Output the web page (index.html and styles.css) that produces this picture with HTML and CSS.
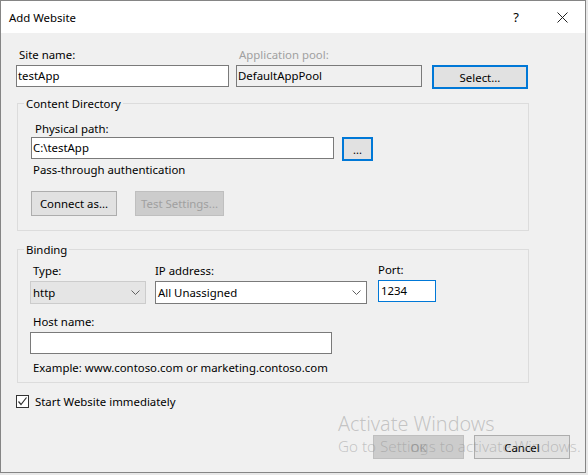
FILE: index.html
```html
<!DOCTYPE html>
<html lang="en">
<head>
    <meta charset="UTF-8">
    <title>Add Website</title>
    <link rel="stylesheet" href="styles.css">
</head>
<body>
    <div class="window">
        <div class="titlebar">
            <div class="title">Add Website</div>
            <div class="caption-btn">?</div>
            <div class="caption-btn">
                <svg width="11" height="11" viewBox="0 0 11 11"><path d="M0.5 0.5 L10.5 10.5 M10.5 0.5 L0.5 10.5" stroke="#222" stroke-width="1" fill="none"/></svg>
            </div>
        </div>

        <div class="body">
            <!-- Site name / app pool -->
            <div class="site-row">
                <div class="field site-field">
                    <div class="label">Site name:</div>
                    <div class="input">testApp</div>
                </div>
                <div class="field pool-field">
                    <div class="label disabled">Application pool:</div>
                    <div class="input readonly">DefaultAppPool</div>
                </div>
                <div class="btn focused select-btn">Select...</div>
            </div>

            <!-- Content Directory -->
            <fieldset class="group">
                <legend>Content Directory</legend>
                <div class="group-inner content-dir">
                    <div class="label">Physical path:</div>
                    <div class="path-row">
                        <div class="input path-input">C:\testApp</div>
                        <div class="btn focused browse-btn">...</div>
                    </div>
                    <div class="note">Pass-through authentication</div>
                    <div class="btn-row">
                        <div class="btn connect-btn">Connect as...</div>
                        <div class="btn disabled-btn test-btn">Test Settings...</div>
                    </div>
                </div>
            </fieldset>

            <!-- Binding -->
            <fieldset class="group binding">
                <legend>Binding</legend>
                <div class="group-inner binding-inner">
                    <div class="binding-row">
                        <div class="field type-field">
                            <div class="label">Type:</div>
                            <div class="select gray">
                                <span>http</span>
                                <svg width="9" height="5" viewBox="0 0 9 5"><path d="M0.5 0.5 L4.5 4.5 L8.5 0.5" stroke="#606060" fill="none"/></svg>
                            </div>
                        </div>
                        <div class="field ip-field">
                            <div class="label flush">IP address:</div>
                            <div class="select">
                                <span>All Unassigned</span>
                                <svg width="9" height="5" viewBox="0 0 9 5"><path d="M0.5 0.5 L4.5 4.5 L8.5 0.5" stroke="#606060" fill="none"/></svg>
                            </div>
                        </div>
                        <div class="field port-field">
                            <div class="label flush">Port:</div>
                            <div class="input port-input">1234</div>
                        </div>
                    </div>
                    <div class="label host-label">Host name:</div>
                    <div class="input host-input"></div>
                    <div class="note example">Example: www.contoso.com or marketing.contoso.com</div>
                </div>
            </fieldset>

            <div class="check-row">
                <div class="checkbox">
                    <svg width="11" height="11" viewBox="0 0 11 11"><path d="M1.5 5.5 L4 8.5 L9.5 1.5" stroke="#333" stroke-width="1.2" fill="none"/></svg>
                </div>
                <span>Start Website immediately</span>
            </div>

            <div class="footer">
                <div class="btn disabled-btn ok-btn">OK</div>
                <div class="btn cancel-btn">Cancel</div>
            </div>
        </div>

        <div class="watermark">
            <div class="wm-title">Activate Windows</div>
            <div class="wm-sub">Go to Settings to activate Windows.</div>
        </div>
    </div>
</body>
</html>
```

FILE: styles.css
```css
* {
    box-sizing: border-box;
}

body {
    margin: 0;
    background-color: #e8e8e8;
    font-family: 'Noto Sans', 'Open Sans', sans-serif;
    font-size: 11.4px;
    color: #000;
}

.window {
    position: relative;
    width: 586px;
    height: 473px;
    border: 1px solid #858585;
    background-color: #f0f0f0;
    display: flex;
    flex-direction: column;
}

.titlebar {
    height: 32px;
    background-color: #fff;
    display: flex;
    align-items: center;
    padding-left: 8px;
}

.title {
    flex: 1;
}

.caption-btn {
    width: 46px;
    height: 32px;
    display: flex;
    align-items: center;
    justify-content: center;
    font-size: 13px;
}

.body {
    flex: 1;
    display: flex;
    flex-direction: column;
    padding: 14px 0 13px 15px;
}

.label {
    line-height: 15px;
    height: 15px;
    padding-left: 3px;
    margin-bottom: 3px;
    white-space: nowrap;
}

.label.flush {
    padding-left: 0;
}

.disabled {
    color: #a0a0a0;
}

.input {
    height: 22px;
    line-height: 20px;
    border: 1px solid #7a7a7a;
    background-color: #fff;
    padding-left: 1px;
    white-space: nowrap;
}

.input.readonly {
    background-color: #f0f0f0;
}

.btn {
    height: 24px;
    display: flex;
    align-items: center;
    justify-content: center;
    background-color: #e1e1e1;
    border: 1px solid #adadad;
    white-space: nowrap;
}

.btn.focused {
    border: 2px solid #0078d7;
}

.disabled-btn {
    background-color: #cccccc;
    border-color: #bfbfbf;
    color: #a0a0a0;
}

/* Site row */
.site-row {
    display: flex;
    align-items: flex-start;
}

.site-field {
    width: 213px;
}

.pool-field {
    width: 186px;
    margin-left: 7px;
}

.select-btn {
    width: 96px;
    margin-left: 10px;
    margin-top: 18px;
}

/* Groups */
.group {
    margin: 7px 0 0 1px;
    width: 512px;
    padding: 0;
    border: 1px solid #dcdcdc;
    min-width: 0;
}

.group legend {
    margin-left: 6px;
    padding: 0 2px;
    line-height: 15px;
}

.content-dir {
    padding: 10px 0 14px 13px;
}

.content-dir .label {
    padding-left: 4px;
    margin-bottom: 1px;
}

.path-row {
    display: flex;
    align-items: flex-start;
}

.path-input {
    width: 303px;
}

.browse-btn {
    width: 31px;
    margin-left: 8px;
    font-size: 11px;
}

.note {
    line-height: 15px;
    margin-top: 1px;
    padding-left: 2px;
}

.btn-row {
    display: flex;
    margin-top: 14px;
}

.connect-btn {
    width: 86px;
    height: 25px;
}

.test-btn {
    width: 89px;
    height: 25px;
    margin-left: 18px;
}

/* Binding */
.group.binding {
    margin-top: 11px;
}

.binding-inner {
    padding: 6px 0 7px 12px;
}

.binding-row {
    display: flex;
    align-items: flex-start;
}

.type-field {
    width: 116px;
}

.ip-field {
    width: 212px;
    margin-left: 9px;
}

.port-field {
    width: 58px;
    margin-left: 11px;
    margin-top: -1px;
}

.select {
    height: 23px;
    border: 1px solid #7a7a7a;
    background-color: #fff;
    display: flex;
    align-items: center;
    justify-content: space-between;
    padding: 0 5px 0 2px;
}

.select.gray {
    background-color: #e5e5e5;
    border-color: #cccccc;
}

.port-input {
    border-color: #0078d7;
    padding-left: 2px;
}

.host-label {
    margin-top: 10px;
}

.host-input {
    width: 302px;
}

.example {
    margin-top: 6px;
    padding-left: 3px;
}

/* Checkbox */
.check-row {
    display: flex;
    align-items: center;
    margin-top: 11px;
    line-height: 15px;
}

.checkbox {
    width: 13px;
    height: 13px;
    border: 1px solid #333;
    background-color: #fff;
    display: flex;
    align-items: center;
    justify-content: center;
    margin-right: 6px;
}

/* Footer */
.footer {
    margin-top: auto;
    display: flex;
    justify-content: flex-end;
    padding-right: 15px;
}

.ok-btn {
    width: 91px;
}

.cancel-btn {
    width: 96px;
    margin-left: 10px;
}

/* Activation watermark sits over the dialog */
.watermark {
    position: absolute;
    left: 337px;
    top: 410px;
    color: rgba(140, 140, 140, 0.45);
    pointer-events: none;
    white-space: nowrap;
}

.wm-title {
    font-size: 19.8px;
    line-height: 25px;
    font-weight: 300;
}

.wm-sub {
    font-size: 15.2px;
    line-height: 21px;
    font-weight: 300;
}
```
